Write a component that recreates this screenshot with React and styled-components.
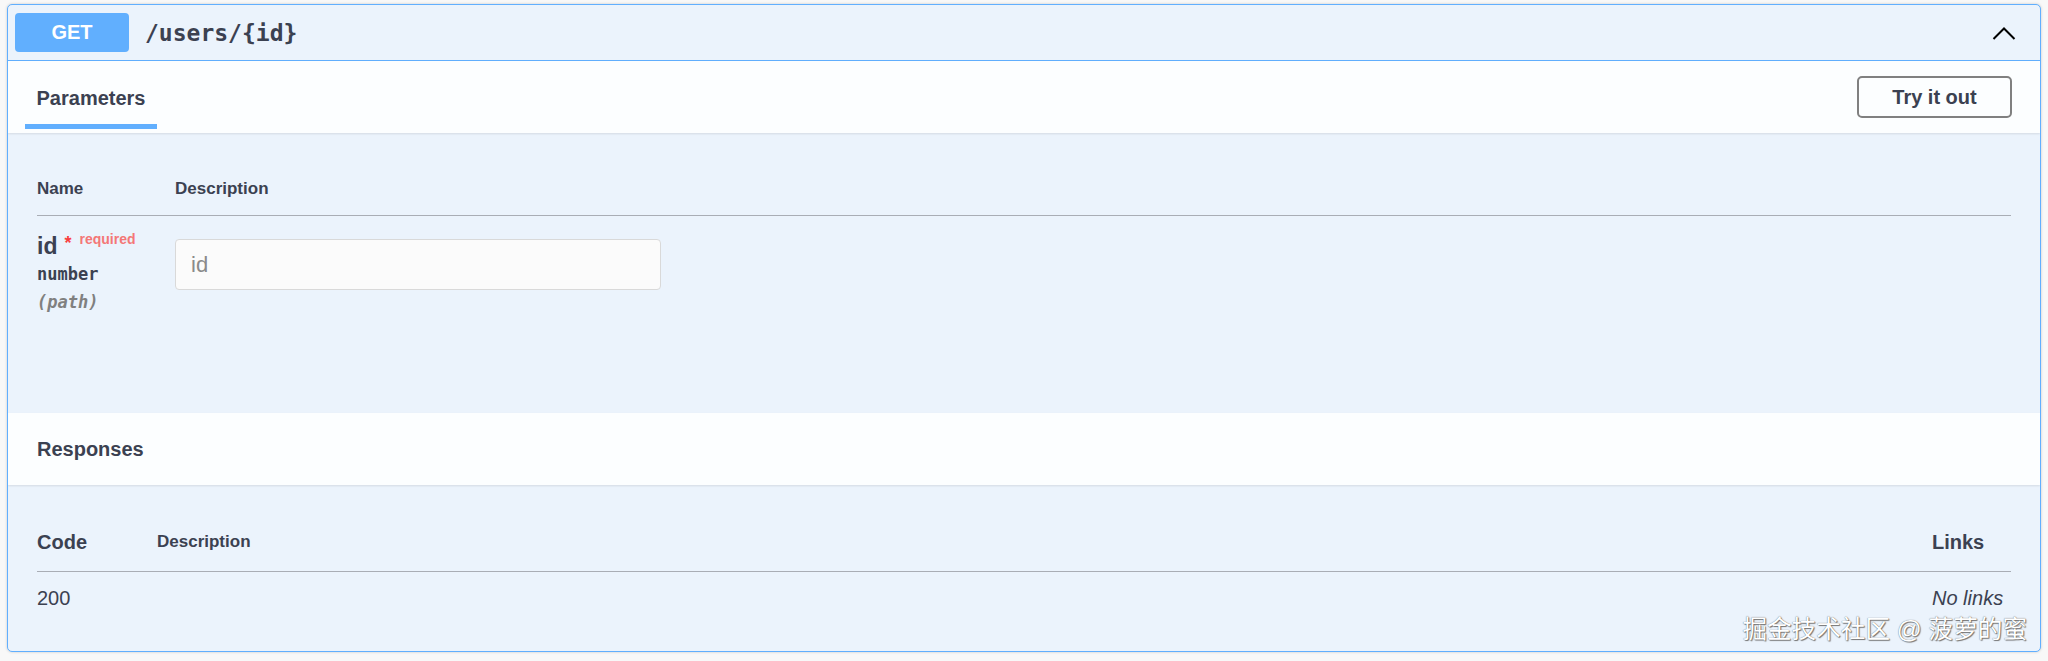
import styled, { createGlobalStyle } from 'styled-components'

const GlobalStyle = createGlobalStyle`
  body {
    margin: 0;
    background: #f8f8f8;
    font-family: "Liberation Sans", Arial, sans-serif;
    color: #3b4151;
  }
`

const Page = styled.div`
  position: relative;
  padding: 4px 7px 8px;
`

const Opblock = styled.div`
  border: 1px solid #61affe;
  border-radius: 5px;
  background: #ebf3fc;
  box-shadow: 0 0 3px rgba(0, 0, 0, 0.19);
  overflow: hidden;
`

const Summary = styled.div`
  display: flex;
  align-items: center;
  padding: 8px 7px;
  border-bottom: 1px solid #61affe;
`

const Method = styled.span`
  display: flex;
  align-items: center;
  justify-content: center;
  width: 114px;
  height: 39px;
  border-radius: 4px;
  background: #61affe;
  color: #fff;
  font-weight: 700;
  font-size: 20px;
`

const Path = styled.span`
  flex: 1;
  margin-left: 16px;
  font-family: "DejaVu Sans Mono", "Liberation Mono", monospace;
  font-weight: 700;
  font-size: 23px;
  color: #3b4151;
`

const Chevron = styled.svg`
  margin-right: 17px;
`

const SectionHeader = styled.div`
  display: flex;
  align-items: center;
  justify-content: space-between;
  height: ${(p) => p.$height}px;
  padding: 0 28px 0 ${(p) => p.$left}px;
  background: rgba(255, 255, 255, 0.85);
  box-shadow: 0 1px 2px rgba(0, 0, 0, 0.1);
  position: relative;
`

const Tab = styled.div`
  align-self: stretch;
  display: flex;
  align-items: center;
  justify-content: center;
  width: 132px;
  font-size: 20px;
  font-weight: 700;
  position: relative;
  padding-top: 2px;

  &::after {
    content: '';
    position: absolute;
    left: 0;
    right: 0;
    bottom: 4px;
    height: 5px;
    background: #61affe;
  }
`

const Title = styled.h4`
  margin: 0;
  font-size: 20px;
  font-weight: 700;
`

const TryButton = styled.button`
  width: 155px;
  height: 42px;
  border: 2px solid #808080;
  border-radius: 5px;
  background: transparent;
  font-family: inherit;
  font-size: 20px;
  font-weight: 700;
  color: #3b4151;
`

const Body = styled.div`
  box-sizing: border-box;
  height: ${(p) => p.$height}px;
  padding: 29px 29px 0;
`

const Table = styled.table`
  width: 100%;
  border-collapse: collapse;
`

const Th = styled.th`
  text-align: left;
  font-size: ${(p) => p.$size || 17}px;
  font-weight: 700;
  line-height: ${(p) => p.$lh || 20}px;
  padding: ${(p) => p.$pad || '17px 0 16px'};
  width: ${(p) => p.$w || 'auto'};
  border-bottom: 1px solid #a9adb5;
  vertical-align: middle;
`

const Td = styled.td`
  vertical-align: top;
  padding: ${(p) => p.$pad || '14px 0 0'};
  font-size: 20px;
  line-height: 24px;
  font-style: ${(p) => (p.$italic ? 'italic' : 'normal')};
`

const ParamName = styled.div`
  display: flex;
  align-items: flex-start;
  font-size: 23px;
  font-weight: 700;
  line-height: 28px;
`

const Star = styled.span`
  color: #f93e3e;
  font-size: 18px;
  margin-left: 7px;
  line-height: 22px;
`

const Required = styled.span`
  color: #f47777;
  font-size: 14px;
  line-height: 14px;
  margin-left: 8px;
`

const Mono = styled.div`
  font-family: "DejaVu Sans Mono", "Liberation Mono", monospace;
  font-size: 17px;
  line-height: 28px;
  font-style: ${(p) => (p.$italic ? 'italic' : 'normal')};
  color: ${(p) => (p.$italic ? '#808080' : '#3b4151')};
  font-weight: 700;
`

const Input = styled.input`
  box-sizing: border-box;
  width: 486px;
  height: 51px;
  margin-top: 9px;
  padding: 0 15px;
  border: 1px solid #d9d9d9;
  border-radius: 4px;
  background: #fbfbfb;
  font-family: inherit;
  font-size: 22px;
  color: #3b4151;

  &::placeholder {
    color: #8a8a8a;
  }
`

const Watermark = styled.div`
  position: absolute;
  right: 21px;
  top: 609px;
  font-family: "Liberation Sans", "Noto Sans CJK SC", sans-serif;
  font-size: 24.6px;
  color: #fff;
  text-shadow: 0 0 1px #555, 1px 1px 1px #777;
  white-space: nowrap;
`

export default function App() {
  return (
    <Page>
      <GlobalStyle />
      <Opblock>
        <Summary>
          <Method>GET</Method>
          <Path>/users/{'{id}'}</Path>
          <Chevron width="24" height="14" viewBox="0 0 24 14">
            <polyline points="1.5,13 12,2.5 22.5,13" fill="none" stroke="#000" strokeWidth="2" />
          </Chevron>
        </Summary>

        <SectionHeader $height={72} $left={17}>
          <Tab>Parameters</Tab>
          <TryButton>Try it out</TryButton>
        </SectionHeader>

        <Body $height={280}>
          <Table>
            <thead>
              <tr>
                <Th $w="138px">Name</Th>
                <Th>Description</Th>
              </tr>
            </thead>
            <tbody>
              <tr>
                <Td $pad="16px 0 0">
                  <ParamName>
                    id<Star>*</Star>
                    <Required>required</Required>
                  </ParamName>
                  <Mono>number</Mono>
                  <Mono $italic>(path)</Mono>
                </Td>
                <Td>
                  <Input placeholder="id" />
                </Td>
              </tr>
            </tbody>
          </Table>
        </Body>

        <SectionHeader $height={72} $left={29}>
          <Title>Responses</Title>
        </SectionHeader>

        <Body $height={166}>
          <Table>
            <thead>
              <tr>
                <Th $w="120px" $size={20} $lh={24} $pad="16px 0 17px">Code</Th>
                <Th $lh={24} $pad="16px 0 17px">Description</Th>
                <Th $w="79px" $size={20} $lh={24} $pad="16px 0 17px">Links</Th>
              </tr>
            </thead>
            <tbody>
              <tr>
                <Td>200</Td>
                <Td />
                <Td $italic>No links</Td>
              </tr>
            </tbody>
          </Table>
        </Body>
      </Opblock>
      <Watermark>掘金技术社区 @ 菠萝的蜜</Watermark>
    </Page>
  )
}
